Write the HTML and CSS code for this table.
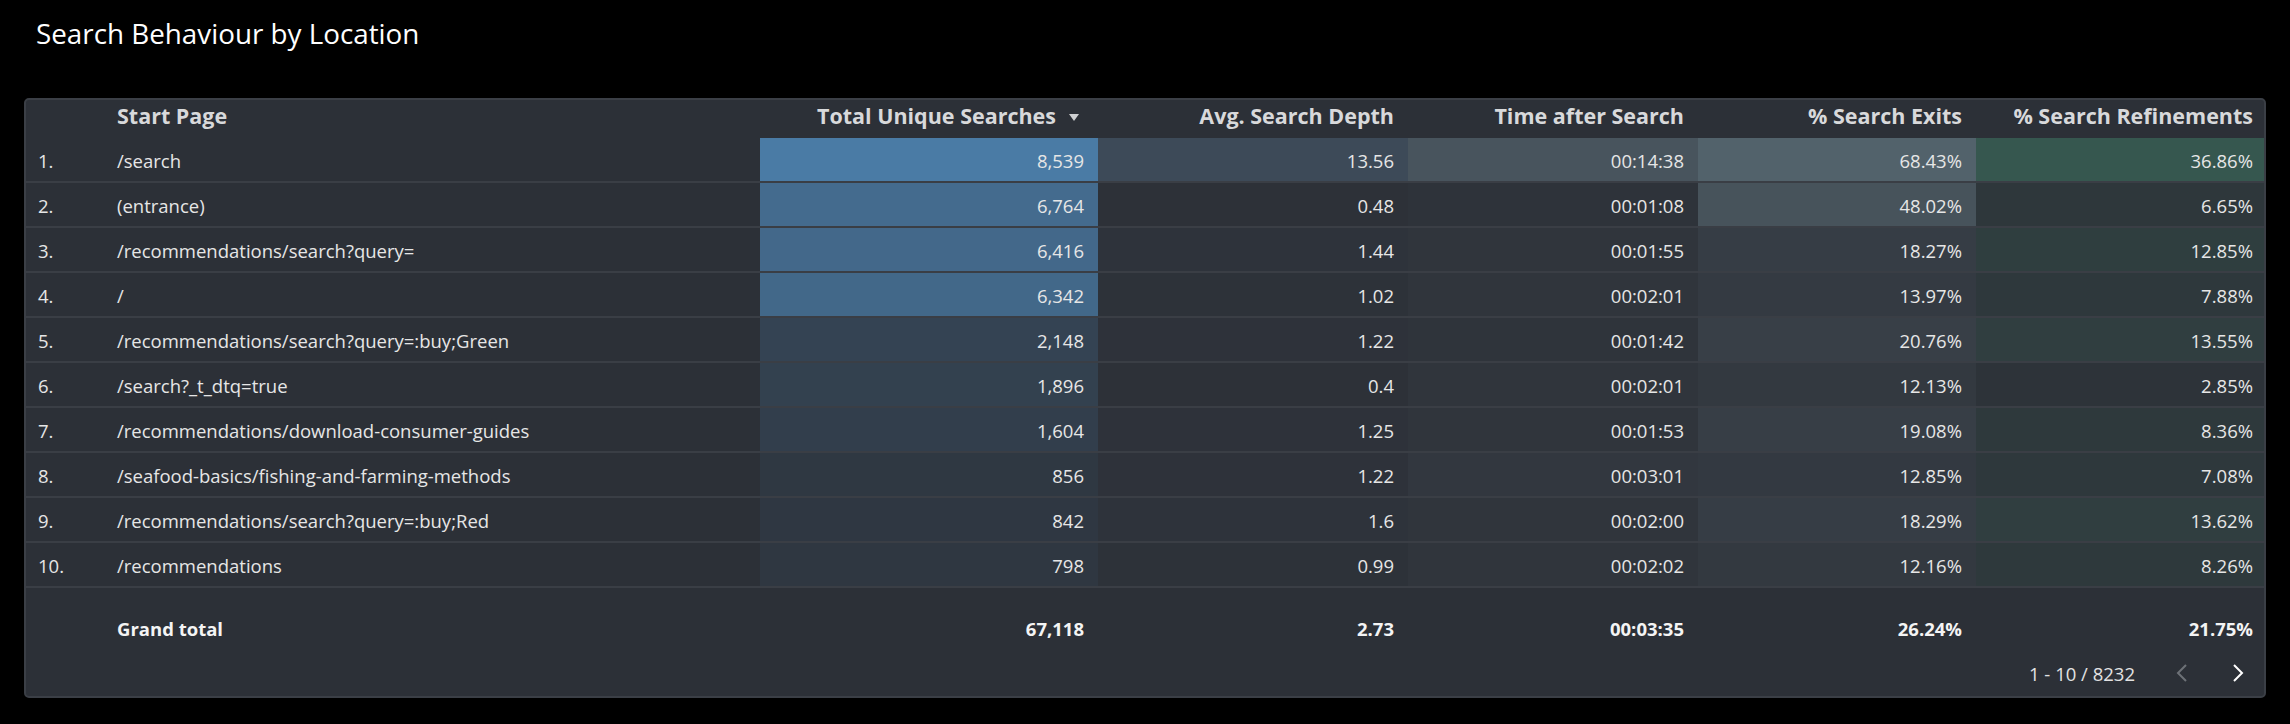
FILE: index.html
```html
<!DOCTYPE html>
<html lang="en">
<head>
<meta charset="utf-8">
<title>Search Behaviour by Location</title>
<link rel="stylesheet" href="styles.css">
</head>
<body>
<h1 class="title">Search Behaviour by Location</h1>
<div class="panel">
  <table class="grid">
    <colgroup>
      <col class="c-idx"><col class="c-page"><col class="c-tus"><col class="c-asd"><col class="c-tas"><col class="c-exit"><col class="c-ref">
    </colgroup>
    <thead>
      <tr>
        <th></th>
        <th class="txt">Start Page</th>
        <th class="num sorted">Total Unique Searches<svg class="sort" width="10" height="7" viewBox="0 0 10 7"><path d="M0 0h10L5 7z"/></svg></th>
        <th class="num">Avg. Search Depth</th>
        <th class="num">Time after Search</th>
        <th class="num">% Search Exits</th>
        <th class="num last">% Search Refinements</th>
      </tr>
    </thead>
    <tbody>
      <tr><td class="idx">1.</td><td class="txt">/search</td><td class="num" style="background:rgb(74,123,165)">8,539</td><td class="num" style="background:rgb(61,74,88)">13.56</td><td class="num" style="background:rgb(72,84,93)">00:14:38</td><td class="num" style="background:rgb(82,98,107)">68.43%</td><td class="num last" style="background:rgb(54,87,79)">36.86%</td></tr>
      <tr><td class="idx">2.</td><td class="txt">(entrance)</td><td class="num" style="background:rgb(68,107,142)">6,764</td><td class="num" style="background:rgb(45,49,56)">0.48</td><td class="num" style="background:rgb(46,51,58)">00:01:08</td><td class="num" style="background:rgb(71,83,91)">48.02%</td><td class="num last" style="background:rgb(46,55,59)">6.65%</td></tr>
      <tr><td class="idx">3.</td><td class="txt">/recommendations/search?query=</td><td class="num" style="background:rgb(67,104,138)">6,416</td><td class="num" style="background:rgb(46,51,59)">1.44</td><td class="num" style="background:rgb(48,53,60)">00:01:55</td><td class="num" style="background:rgb(54,61,69)">18.27%</td><td class="num last" style="background:rgb(47,62,63)">12.85%</td></tr>
      <tr><td class="idx">4.</td><td class="txt">/</td><td class="num" style="background:rgb(66,104,137)">6,342</td><td class="num" style="background:rgb(45,50,57)">1.02</td><td class="num" style="background:rgb(48,53,60)">00:02:01</td><td class="num" style="background:rgb(52,58,66)">13.97%</td><td class="num last" style="background:rgb(46,56,60)">7.88%</td></tr>
      <tr><td class="idx">5.</td><td class="txt">/recommendations/search?query=:buy;Green</td><td class="num" style="background:rgb(52,67,83)">2,148</td><td class="num" style="background:rgb(46,50,58)">1.22</td><td class="num" style="background:rgb(47,52,59)">00:01:42</td><td class="num" style="background:rgb(56,63,71)">20.76%</td><td class="num last" style="background:rgb(48,62,64)">13.55%</td></tr>
      <tr><td class="idx">6.</td><td class="txt">/search?_t_dtq=true</td><td class="num" style="background:rgb(51,65,79)">1,896</td><td class="num" style="background:rgb(45,49,56)">0.4</td><td class="num" style="background:rgb(48,53,60)">00:02:01</td><td class="num" style="background:rgb(51,57,64)">12.13%</td><td class="num last" style="background:rgb(45,51,57)">2.85%</td></tr>
      <tr><td class="idx">7.</td><td class="txt">/recommendations/download-consumer-guides</td><td class="num" style="background:rgb(50,62,76)">1,604</td><td class="num" style="background:rgb(46,50,58)">1.25</td><td class="num" style="background:rgb(48,53,60)">00:01:53</td><td class="num" style="background:rgb(55,62,70)">19.08%</td><td class="num last" style="background:rgb(46,57,60)">8.36%</td></tr>
      <tr><td class="idx">8.</td><td class="txt">/seafood-basics/fishing-and-farming-methods</td><td class="num" style="background:rgb(47,56,66)">856</td><td class="num" style="background:rgb(46,50,58)">1.22</td><td class="num" style="background:rgb(50,55,63)">00:03:01</td><td class="num" style="background:rgb(51,57,65)">12.85%</td><td class="num last" style="background:rgb(46,56,60)">7.08%</td></tr>
      <tr><td class="idx">9.</td><td class="txt">/recommendations/search?query=:buy;Red</td><td class="num" style="background:rgb(47,55,66)">842</td><td class="num" style="background:rgb(46,51,59)">1.6</td><td class="num" style="background:rgb(48,53,60)">00:02:00</td><td class="num" style="background:rgb(54,61,69)">18.29%</td><td class="num last" style="background:rgb(48,62,64)">13.62%</td></tr>
      <tr><td class="idx">10.</td><td class="txt">/recommendations</td><td class="num" style="background:rgb(47,55,65)">798</td><td class="num" style="background:rgb(45,50,57)">0.99</td><td class="num" style="background:rgb(48,53,60)">00:02:02</td><td class="num" style="background:rgb(51,57,64)">12.16%</td><td class="num last" style="background:rgb(46,57,60)">8.26%</td></tr>
    </tbody>
    <tfoot>
      <tr><td></td><td class="txt">Grand total</td><td class="num">67,118</td><td class="num">2.73</td><td class="num">00:03:35</td><td class="num">26.24%</td><td class="num last">21.75%</td></tr>
    </tfoot>
  </table>
  <div class="pager">
    <span class="range">1 - 10 / 8232</span>
    <svg class="chev prev" width="13" height="18" viewBox="0 0 13 18"><polyline points="11,1 3,9 11,17"/></svg>
    <svg class="chev next" width="13" height="18" viewBox="0 0 13 18"><polyline points="2,1 10,9 2,17"/></svg>
  </div>
</div>
</body>
</html>
```
FILE: styles.css
```css
html, body {
  margin: 0;
  padding: 0;
  background: #000;
}
body {
  width: 2290px;
  height: 724px;
  overflow: hidden;
  font-family: "Open Sans", "Noto Sans", sans-serif;
  color: #e6e6e6;
}
.title {
  margin: 15px 0 0 36px;
  font-size: 27.8px;
  line-height: 36px;
  font-weight: 400;
  color: #ffffff;
}
.panel {
  margin: 47px 0 0 24px;
  width: 2242px;
  box-sizing: border-box;
  border: 2px solid #3b3f46;
  border-radius: 5px;
  background: #2c3037;
  overflow: hidden;
}
.grid {
  width: 2238px;
  table-layout: fixed;
  border-collapse: separate;
  border-spacing: 0;
  font-size: 18.5px;
}
.c-idx { width: 79px; }
.c-page { width: 655px; }
.c-tus { width: 338px; }
.c-asd { width: 310px; }
.c-tas { width: 290px; }
.c-exit { width: 278px; }
.c-ref { width: 288px; }

th {
  font-size: 21.5px;
  font-weight: 700;
  color: #d8d9db;
  line-height: 30px;
  padding: 1px 14px 7px 14px;
  white-space: nowrap;
}
th.txt { text-align: left; padding-left: 12px; }
th.num { text-align: right; }
th.sorted { padding-right: 19px; }
th.last { padding-right: 11px; }
.sort {
  fill: #cfd0d2;
  margin-left: 13px;
  vertical-align: 3px;
}

tbody td {
  line-height: 40px;
  padding: 3px 14px 0 14px;
  border-bottom: 2px solid #3a3e45;
  white-space: nowrap;
  overflow: hidden;
}
td.idx { padding-left: 12px; padding-right: 0; }
td.txt { text-align: left; padding-left: 12px; }
td.num { text-align: right; }
td.last { padding-right: 11px; }

tfoot td {
  font-weight: 700;
  color: #f4f4f4;
  line-height: 24px;
  padding: 29px 14px 9px 14px;
}
tfoot td.txt { padding-left: 12px; }
tfoot td.last { padding-right: 11px; }

.pager {
  display: flex;
  justify-content: flex-end;
  align-items: center;
  height: 46px;
  padding-right: 19px;
  font-size: 18.5px;
  color: #e2e2e2;
}
.chev {
  fill: none;
  stroke-width: 2;
}
.prev { margin-left: 40px; stroke: #6d7177; }
.next { margin-left: 44px; stroke: #ffffff; }
```
